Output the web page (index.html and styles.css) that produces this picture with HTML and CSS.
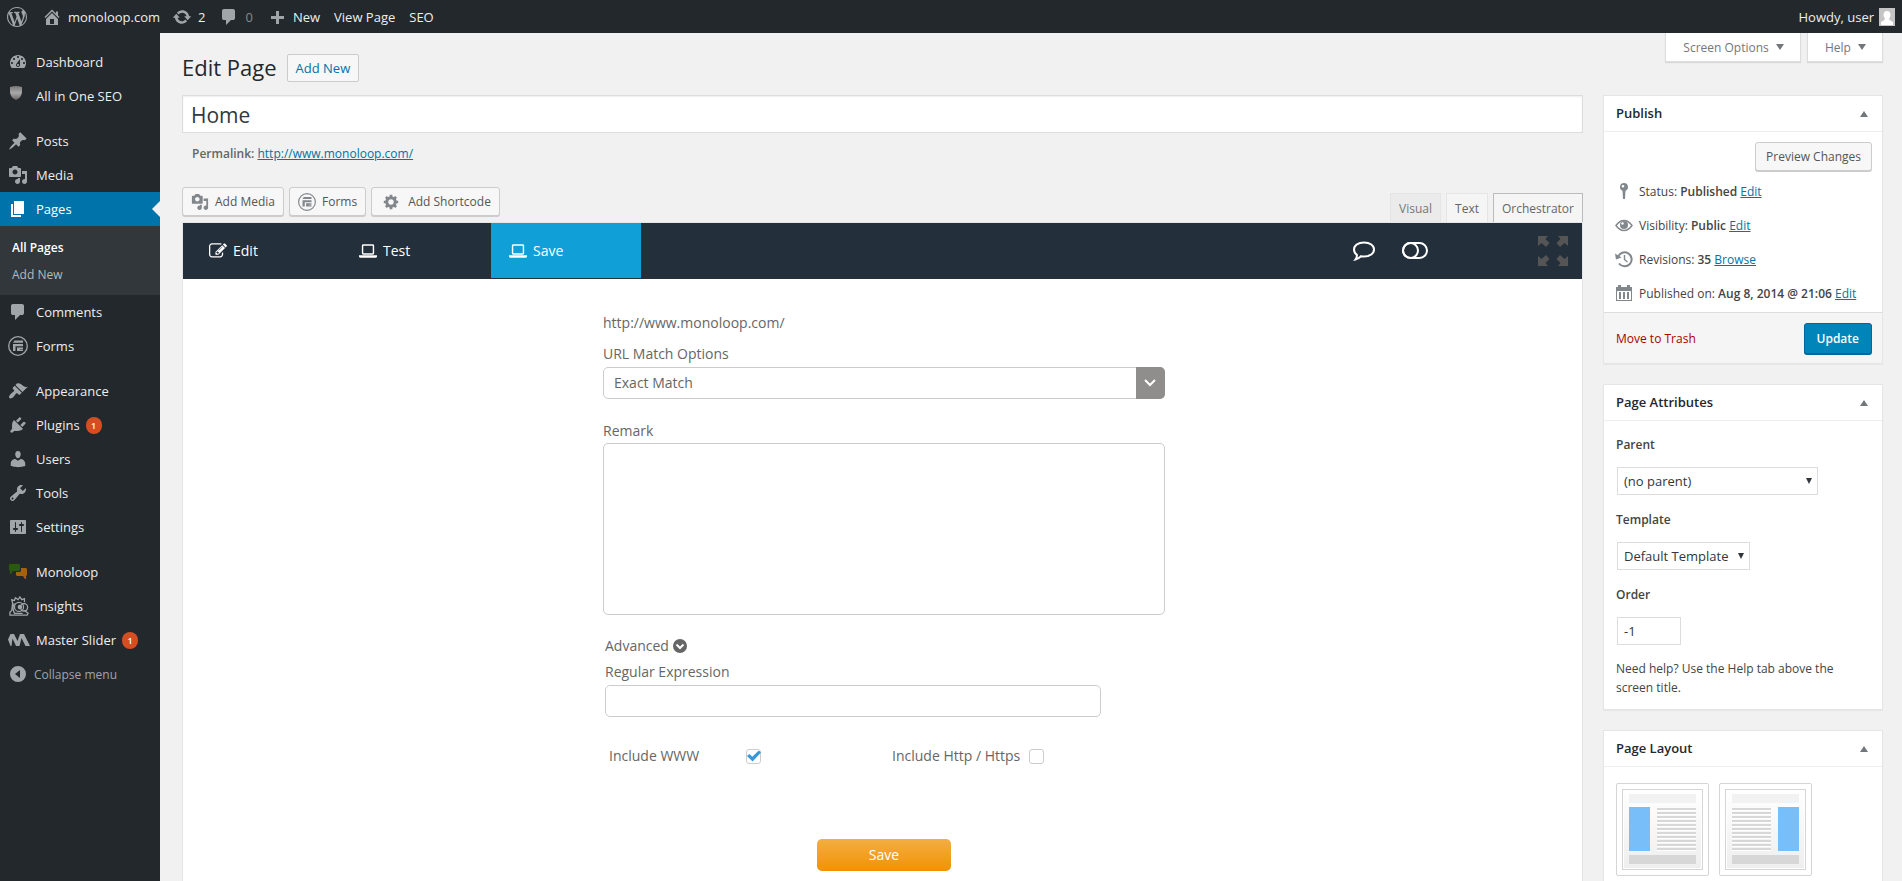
FILE: index.html
```html
<!DOCTYPE html>
<html lang="en">
<head>
    <meta charset="UTF-8">
    <meta name="viewport" content="width=device-width, initial-scale=1.0">
    <title>Edit Page</title>
    <link rel="stylesheet" href="styles.css">
</head>
<body>
    <!-- Icon set -->
    <svg class="sprite" aria-hidden="true">
        <symbol id="i-wordpress" viewBox="0 0 20 20"><path d="M20 10c0-5.51-4.49-10-10-10C4.48 0 0 4.49 0 10c0 5.52 4.48 10 10 10 5.51 0 10-4.48 10-10zM7.78 15.37L4.37 6.22c.55-.02 1.17-.08 1.17-.08.5-.06.44-1.13-.06-1.11 0 0-1.45.11-2.37.11-.18 0-.37 0-.58-.01C4.12 2.69 6.87 1.11 10 1.11c2.33 0 4.45.87 6.05 2.34-.68-.11-1.65.39-1.65 1.58 0 .74.45 1.36.9 2.1.35.61.55 1.36.55 2.46 0 1.49-1.4 5-1.4 5l-3.03-8.37c.54-.02.82-.17.82-.17.5-.05.44-1.25-.06-1.22 0 0-1.44.12-2.38.12-.87 0-2.33-.12-2.33-.12-.5-.03-.56 1.2-.06 1.22l.92.08 1.26 3.41zM17.41 10c.24-.64.74-1.87.43-4.25.7 1.29 1.05 2.71 1.05 4.25 0 3.29-1.73 6.24-4.4 7.78.97-2.59 1.94-5.2 2.92-7.78zM6.1 18.09C3.12 16.65 1.11 13.53 1.11 10c0-1.3.23-2.48.72-3.59C3.25 10.3 4.67 14.2 6.1 18.09zm4.03-6.63l2.58 6.98c-.86.29-1.76.45-2.71.45-.79 0-1.57-.11-2.29-.33.81-2.38 1.62-4.74 2.42-7.1z"/></symbol>
        <symbol id="i-home" viewBox="0 0 20 20"><path d="M16 8.5l1.53 1.53-1.06 1.06L10 4.6l-6.47 6.49-1.06-1.06L10 2.5l4 4v-2h2v4zm-6-2.46l6 5.99V18H4v-5.97zM12 17v-5H8v5h4z"/></symbol>
        <symbol id="i-update" viewBox="0 0 20 20"><path d="M10.2 3.28c3.53 0 6.43 2.61 6.92 6h2.08l-3.5 4-3.5-4h2.32c-.45-1.97-2.21-3.45-4.32-3.45-1.45 0-2.73.71-3.54 1.78L4.95 5.66C6.23 4.2 8.11 3.28 10.2 3.28zm-.4 13.44c-3.52 0-6.43-2.61-6.92-6H.8l3.5-4c1.17 1.33 2.33 2.67 3.5 4H5.48c.45 1.97 2.21 3.45 4.32 3.45 1.45 0 2.73-.71 3.54-1.78l1.71 1.95c-1.28 1.46-3.15 2.38-5.25 2.38z"/></symbol>
        <symbol id="i-comment" viewBox="0 0 20 20"><path d="M5 2h9q.82 0 1.41.59T16 4v7q0 .82-.59 1.41T14 13h-2l-5 5v-5H5q-.82 0-1.41-.59T3 11V4q0-.82.59-1.41T5 2z"/></symbol>
        <symbol id="i-plus" viewBox="0 0 20 20"><path d="M17 9v3h-5v5H9v-5H4V9h5V4h3v5h5z"/></symbol>
        <symbol id="i-dashboard" viewBox="0 0 20 20"><path d="M3.76 16h12.48c1.1-1.37 1.76-3.11 1.76-5 0-4.42-3.58-8-8-8s-8 3.58-8 8c0 1.89.66 3.63 1.76 5zM10 4c.55 0 1 .45 1 1s-.45 1-1 1-1-.45-1-1 .45-1 1-1zM6 6c.55 0 1 .45 1 1s-.45 1-1 1-1-.45-1-1 .45-1 1-1zm8 0c.55 0 1 .45 1 1s-.45 1-1 1-1-.45-1-1 .45-1 1-1zm-5.37 5.55L12 7v6c0 1.1-.9 2-2 2s-2-.9-2-2c0-.57.24-1.08.63-1.45zM4 10c.55 0 1 .45 1 1s-.45 1-1 1-1-.45-1-1 .45-1 1-1zm12 0c.55 0 1 .45 1 1s-.45 1-1 1-1-.45-1-1 .45-1 1-1zm-5 3c0-.55-.45-1-1-1s-1 .45-1 1 .45 1 1 1 1-.45 1-1z"/></symbol>
        <symbol id="i-shield" viewBox="0 0 20 20">
            <linearGradient id="shield-fill" x1="0" y1="0" x2="0" y2="1"><stop offset="0" stop-color="#777"/><stop offset=".5" stop-color="#aaa"/><stop offset="1" stop-color="#666"/></linearGradient>
            <path fill="url(#shield-fill)" d="M2 1q6-2 12 0v5q0 5-6 8-6-3-6-8z"/>
        </symbol>
        <symbol id="i-pin" viewBox="0 0 20 20"><path d="M10.44 3.02l1.82-1.82 6.36 6.35-1.83 1.82c-1.05-.68-2.48-.57-3.41.36l-.75.75c-.92.93-1.04 2.35-.35 3.41l-1.83 1.82-2.41-2.41-2.8 2.79c-.42.42-3.38 2.71-3.8 2.29s1.86-3.39 2.28-3.81l2.79-2.79L4.1 9.36l1.83-1.82c1.05.69 2.48.57 3.4-.36l.75-.75c.93-.92 1.05-2.35.36-3.41z"/></symbol>
        <symbol id="i-media" viewBox="0 0 20 20"><path d="M13 11V4c0-.55-.45-1-1-1h-1.67L9 1H5L3.67 3H2c-.55 0-1 .45-1 1v7c0 .55.45 1 1 1h10c.55 0 1-.45 1-1zM7 4.5c1.38 0 2.5 1.12 2.5 2.5S8.38 9.5 7 9.5 4.5 8.38 4.5 7 5.62 4.5 7 4.5zM14 6h5v10.5c0 1.38-1.12 2.5-2.5 2.5S14 17.88 14 16.5s1.12-2.5 2.5-2.5c.17 0 .34.02.5.05V9h-3V6zm-4 8.05V13h2v3.5c0 1.38-1.12 2.5-2.5 2.5S7 17.88 7 16.5 8.12 14 9.5 14c.17 0 .34.02.5.05z"/></symbol>
        <symbol id="i-page" viewBox="0 0 20 20"><path d="M6 15V2h10v13H6zm-1 1h8v2H3V5h2v11z"/></symbol>
        <symbol id="i-forms" viewBox="0 0 20 20"><circle cx="10" cy="10" r="9.3" fill="none" stroke="currentColor" stroke-width="1.3"/><path d="M6.500 4.500H15v2.200H5zM5 8h10v2.200H7.500V15H5zM9 11.500h6v1.500h-3v.5h3V15H9z"/></symbol>
        <symbol id="i-appearance" viewBox="0 0 20 20"><path d="M14.48 11.06L7.41 3.99l1.5-1.5c.5-.56 2.3-.47 3.51.32 1.21.8 1.43 1.28 2.91 2.1 1.18.64 2.45 1.26 4.45.85zm-.71.71L6.7 4.7 4.93 6.47c-.39.39-.39 1.02 0 1.41l1.06 1.06c.39.39.39 1.03 0 1.42-.6.6-1.43 1.11-2.21 1.69-.35.26-.7.53-1.01.84C1.43 14.23.4 16.08 1.4 17.07c.99 1 2.84-.03 4.18-1.36.31-.31.58-.66.85-1.02.57-.78 1.08-1.61 1.69-2.21.39-.39 1.02-.39 1.41 0l1.06 1.06c.39.39 1.02.39 1.41 0z"/></symbol>
        <symbol id="i-plugins" viewBox="0 0 20 20"><path d="M13.11 4.36L9.87 7.6 8 5.73l3.24-3.24c.35-.34 1.05-.2 1.56.32.52.51.66 1.21.31 1.55zm-8 1.77l.91-1.12 9.01 9.01-1.19.84c-.71.71-2.63 1.16-3.82 1.16H6.14L4.9 17.26c-.59.59-1.54.59-2.12 0-.59-.58-.59-1.53 0-2.12l1.24-1.24v-3.88c0-1.13.4-3.19 1.09-3.89zm7.26 3.97l3.24-3.24c.34-.35 1.04-.21 1.55.31.52.51.66 1.21.31 1.55l-3.24 3.25z"/></symbol>
        <symbol id="i-users" viewBox="0 0 20 20"><path d="M10 9.25c-2.27 0-2.73-3.44-2.73-3.44C7 4.02 7.82 2 9.97 2c2.16 0 2.98 2.02 2.71 3.81 0 0-.41 3.44-2.68 3.44zm0 2.57L12.72 10c2.39 0 4.52 2.33 4.52 4.53v2.49s-3.65 1.13-7.24 1.13c-3.65 0-7.24-1.13-7.24-1.13v-2.49c0-2.25 1.94-4.48 4.47-4.48z"/></symbol>
        <symbol id="i-tools" viewBox="0 0 20 20"><path d="M16.68 9.77c-1.34 1.34-3.3 1.67-4.95.99l-5.41 6.52c-.99.99-2.59.99-3.58 0s-.99-2.59 0-3.57l6.52-5.42c-.68-1.65-.35-3.61.99-4.95 1.28-1.28 3.12-1.62 4.72-1.06l-2.89 2.89 2.82 2.82 2.86-2.87c.53 1.58.18 3.39-1.08 4.65zM3.81 16.21c.4.39 1.04.39 1.43 0 .4-.4.4-1.04 0-1.43-.39-.4-1.03-.4-1.43 0-.39.39-.39 1.03 0 1.43z"/></symbol>
        <symbol id="i-settings" viewBox="0 0 20 20"><path d="M18 16V4c0-.55-.45-1-1-1H3c-.55 0-1 .45-1 1v12c0 .55.45 1 1 1h14c.55 0 1-.45 1-1zM8 11h1c.55 0 1 .45 1 1s-.45 1-1 1H8v1.5c0 .28-.22.5-.5.5s-.5-.22-.5-.5V13H6c-.55 0-1-.45-1-1s.45-1 1-1h1V5.500c0-.28.22-.5.5-.5s.5.22.5.5V11zm5-2h-1c-.55 0-1-.45-1-1s.45-1 1-1h1V5.500c0-.28.22-.5.5-.5s.5.22.5.5V7h1c.55 0 1 .45 1 1s-.45 1-1 1h-1v5.500c0 .28-.22.5-.5.5s-.5-.22-.5-.5V9z"/></symbol>
        <symbol id="i-monoloop" viewBox="0 0 20 20"><path fill="#2a5a10" d="M2 2h9l1 1v5l-1 1H5l-2 3H2V9L1 8V3z"/><path fill="#a5620d" d="M13 6h5l1 1v6l-1 1v3h-1l-2-3H9l-1-1v-3h4l1-1z"/></symbol>
        <symbol id="i-insights" viewBox="0 0 22 22"><g fill="none" stroke="currentColor" stroke-width="1.400"><path d="M4 8l-1-4 3 1 1-3 3 2 2-3 2 3 3-1v4M4 8l-1 8-2 2v3h19l1-2-4-3M6 8q-3 5 0 11h9"/><circle cx="11" cy="12" r="5"/><circle cx="16.500" cy="12.500" r="4"/></g><circle cx="12" cy="12" r="2.500"/></symbol>
        <symbol id="i-masterslider" viewBox="0 0 22 14"><path d="M0 6.500L2.500 1H6l3.500 7L12 1h4l6 12h-4.500L13.500 5l-2 8H8L4.500 5.500l-1 7.500h-1z"/></symbol>
        <symbol id="i-collapse" viewBox="0 0 20 20"><path fill-rule="evenodd" d="M10 2a8 8 0 1 1 0 16 8 8 0 0 1 0-16zm2 4l-5 4 5 4z"/></symbol>
        <symbol id="i-gear" viewBox="0 0 20 20"><circle cx="10" cy="10" r="4.700" fill="none" stroke="currentColor" stroke-width="3.400"/><path d="M8.500 2h3v3h-3zM8.500 15h3v3h-3zM2 8.500h3v3H2zM15 8.500h3v3h-3zM3.300 5.400l2.100-2.100 2 2-2.100 2.100zM12.600 14.700l2.100-2.100 2 2-2.100 2.100zM14.600 3.300l2.100 2.100-2 2-2.100-2.100zM5.300 12.600l2.100 2.100-2 2-2.100-2.100z"/></symbol>
        <symbol id="i-edit" viewBox="0 0 1792 1792"><path d="M888 1184l116-116-152-152-116 116v56h96v96h56zm440-720q-16-16-33 1l-350 350q-17 17-1 33t33-1l350-350q17-17 1-33zm80 594v190q0 119-84.500 203.500t-203.500 84.500h-832q-119 0-203.500-84.500t-84.500-203.500v-832q0-119 84.500-203.500t203.500-84.500h832q63 0 117 25 15 7 18 23 3 17-9 29l-49 49q-14 14-32 8-23-6-45-6h-832q-66 0-113 47t-47 113v832q0 66 47 113t113 47h832q66 0 113-47t47-113v-126q0-13 9-22l64-64q15-15 35-7t20 29zm-96-738l288 288-672 672h-288v-288zm444 132l-92 92-288-288 92-92q28-28 68-28t68 28l152 152q28 28 28 68t-28 68z"/></symbol>
        <symbol id="i-laptop" viewBox="0 0 19 18"><path fill-rule="evenodd" d="M4.500 2h10A1.500 1.500 0 0 1 16 3.500v8a1.500 1.500 0 0 1-1.500 1.500h-10A1.500 1.500 0 0 1 3 11.500v-8A1.500 1.500 0 0 1 4.500 2zm0 1.500v8h10v-8zM0 13.500h19v1.500q-.3 1-1.500 1h-16Q.3 16 0 15z"/></symbol>
        <symbol id="i-bubble" viewBox="0 0 24 20"><path fill="none" stroke="currentColor" stroke-width="2" d="M12 1.500c6 0 10 3 10 7s-4 7-10 7q-1.500 0-3-.3Q6 18 3.500 18.500q1.500-2 1.500-4.500-3-2.200-3-5.500c0-4 4-7 10-7z"/></symbol>
        <symbol id="i-toggle" viewBox="0 0 26 18"><g fill="none" stroke="currentColor" stroke-width="2"><rect x="1" y="1" width="24" height="15" rx="7.500"/><circle cx="8.500" cy="8.500" r="7.500"/></g></symbol>
        <symbol id="i-expand" viewBox="0 0 30 30"><path d="M0 0h10L7.500 3l4 4-3.500 4-4.500-4L0 10zM30 0v10l-3.500-3-4.500 4-3.500-4 4-4L20 0zM0 30V20l3.500 3L8 19l3.500 4-4 4 2.500 3zM30 30H20l2.500-3-4-4 3.500-4 4.500 4 3.500-3z"/></symbol>
        <symbol id="i-status" viewBox="0 0 20 20"><path fill-rule="evenodd" d="M10 2a4 4 0 0 1 1.500 7.700L11 18H9l-.5-8.300A4 4 0 0 1 10 2zm-1 2a1.300 1.300 0 1 0 0 2.600A1.300 1.300 0 0 0 9 4z"/></symbol>
        <symbol id="i-eye" viewBox="0 0 20 20"><path fill="none" stroke="currentColor" stroke-width="1.400" d="M2 10.500q3.500-5 8-5t8 5q-3.500 5-8 5t-8-5z"/><circle cx="10" cy="10" r="4"/><circle cx="8.500" cy="8.500" r="1.200" fill="#fff"/></symbol>
        <symbol id="i-backup" viewBox="0 0 20 20"><path fill="none" stroke="currentColor" stroke-width="2" d="M4 8a7 7 0 1 1 1 6.500"/><path d="M1 4.500l1 6 5.500-2z"/><path fill="none" stroke="currentColor" stroke-width="1.400" d="M10.500 6v4.500l3 2.500"/></symbol>
        <symbol id="i-calendar" viewBox="0 0 20 20"><path fill-rule="evenodd" d="M2 4h2V2h3v2h6V2h3v2h2v14H2zm1 4v9h14V8zM5 9h2v7H5zM9 9h2v7H9zM13 9h2v7h-2z"/></symbol>
        <symbol id="i-chevron-circle" viewBox="0 0 14 14"><circle cx="7" cy="7" r="7"/><path fill="none" stroke="#fff" stroke-width="2" d="M3.500 5.500L7 9l3.500-3.500"/></symbol>
    </svg>

    <header class="adminbar">
        <a href="#" class="ab-logo" aria-label="About WordPress"><svg class="icon"><use href="#i-wordpress"/></svg></a>
        <a href="#" class="ab-site"><svg class="icon"><use href="#i-home"/></svg>monoloop.com</a>
        <a href="#" class="ab-updates"><svg class="icon"><use href="#i-update"/></svg>2</a>
        <a href="#" class="ab-comments"><svg class="icon"><use href="#i-comment"/></svg>0</a>
        <a href="#" class="ab-new"><svg class="icon"><use href="#i-plus"/></svg>New</a>
        <a href="#">View Page</a>
        <a href="#">SEO</a>
        <a href="#" class="ab-user">Howdy, user
            <svg class="avatar" viewBox="0 0 16 18"><path fill="#c4c4c4" d="M0 0h16v18H0z"/><path fill="#fff" d="M8 3q3.500 0 3.500 4 0 2-1.500 3.500 0 1.500 4 3.500v3H2v-3q4-2 4-3.500Q4.500 9 4.500 7 4.500 3 8 3z"/></svg>
        </a>
    </header>

    <div class="layout">
        <nav class="menu">
            <ul>
                <li><a href="#"><svg class="icon"><use href="#i-dashboard"/></svg>Dashboard</a></li>
                <li class="group-end"><a href="#"><svg class="icon"><use href="#i-shield"/></svg>All in One SEO</a></li>
                <li><a href="#"><svg class="icon"><use href="#i-pin"/></svg>Posts</a></li>
                <li><a href="#"><svg class="icon"><use href="#i-media"/></svg>Media</a></li>
                <li>
                    <a href="#" class="current"><svg class="icon"><use href="#i-page"/></svg>Pages</a>
                    <ul class="submenu">
                        <li><a href="#" class="active">All Pages</a></li>
                        <li><a href="#">Add New</a></li>
                    </ul>
                </li>
                <li><a href="#"><svg class="icon"><use href="#i-comment"/></svg>Comments</a></li>
                <li class="group-end"><a href="#"><svg class="icon"><use href="#i-forms"/></svg>Forms</a></li>
                <li><a href="#"><svg class="icon"><use href="#i-appearance"/></svg>Appearance</a></li>
                <li><a href="#"><svg class="icon"><use href="#i-plugins"/></svg>Plugins <span class="count">1</span></a></li>
                <li><a href="#"><svg class="icon"><use href="#i-users"/></svg>Users</a></li>
                <li><a href="#"><svg class="icon"><use href="#i-tools"/></svg>Tools</a></li>
                <li class="group-end"><a href="#"><svg class="icon"><use href="#i-settings"/></svg>Settings</a></li>
                <li><a href="#"><svg class="icon"><use href="#i-monoloop"/></svg>Monoloop</a></li>
                <li><a href="#"><svg class="icon wide"><use href="#i-insights"/></svg>Insights</a></li>
                <li><a href="#"><svg class="icon wide"><use href="#i-masterslider"/></svg>Master Slider <span class="count">1</span></a></li>
                <li><button type="button" class="collapse"><svg class="icon"><use href="#i-collapse"/></svg>Collapse menu</button></li>
            </ul>
        </nav>

        <div class="content">
            <div class="topline">
                <div class="page-title">
                    <h1>Edit Page</h1>
                    <a href="#" class="title-action">Add New</a>
                </div>
                <div class="screen-meta">
                    <button type="button">Screen Options <span class="arrow down"></span></button>
                    <button type="button">Help <span class="arrow down"></span></button>
                </div>
            </div>

            <div class="columns">
                <main class="editor-col">
                    <input type="text" class="title-input" value="Home" aria-label="Title">
                    <div class="permalink"><strong>Permalink:</strong> <a href="#">http://www.monoloop.com/</a></div>

                    <div class="editor-tools">
                        <div class="media-buttons">
                            <button type="button" class="button"><svg class="icon"><use href="#i-media"/></svg>Add Media</button>
                            <button type="button" class="button"><svg class="icon"><use href="#i-forms"/></svg>Forms</button>
                            <button type="button" class="button shortcode"><svg class="icon"><use href="#i-gear"/></svg>Add Shortcode</button>
                        </div>
                        <div class="editor-tabs">
                            <button type="button" class="dim">Visual</button>
                            <button type="button">Text</button>
                            <button type="button" class="selected">Orchestrator</button>
                        </div>
                    </div>

                    <section class="orchestrator">
                        <div class="toolbar">
                            <button type="button" class="step"><svg class="icon"><use href="#i-edit"/></svg>Edit</button>
                            <button type="button" class="step"><svg class="icon"><use href="#i-laptop"/></svg>Test</button>
                            <button type="button" class="step active"><svg class="icon"><use href="#i-laptop"/></svg>Save</button>
                            <div class="toolbar-right">
                                <button type="button" aria-label="Comments"><svg class="bubble"><use href="#i-bubble"/></svg></button>
                                <button type="button" aria-label="Toggle"><svg class="toggle"><use href="#i-toggle"/></svg></button>
                                <button type="button" class="fullscreen" aria-label="Fullscreen"><svg class="expand"><use href="#i-expand"/></svg></button>
                            </div>
                        </div>

                        <form class="save-form">
                            <p class="url">http://www.monoloop.com/</p>
                            <label for="match">URL Match Options</label>
                            <div class="match-select">
                                <select id="match"><option>Exact Match</option></select>
                                <svg viewBox="0 0 29 32"><path fill="none" stroke="#fff" stroke-width="2" d="M9 13l5 5 5-5"/></svg>
                            </div>
                            <label for="remark">Remark</label>
                            <textarea id="remark"></textarea>

                            <div class="advanced">
                                <button type="button" class="advanced-toggle">Advanced <svg><use href="#i-chevron-circle"/></svg></button>
                                <label for="regex">Regular Expression</label>
                                <input type="text" id="regex">
                                <div class="checks">
                                    <label for="www">Include WWW</label>
                                    <input type="checkbox" id="www" checked>
                                    <label for="https">Include Http / Https</label>
                                    <input type="checkbox" id="https">
                                </div>
                            </div>
                            <button type="button" class="save">Save</button>
                        </form>
                    </section>
                </main>

                <aside class="side-col">
                    <section class="postbox">
                        <h2>Publish <span class="arrow up"></span></h2>
                        <div class="publish">
                            <button type="button" class="button preview">Preview Changes</button>
                            <ul>
                                <li><svg class="icon"><use href="#i-status"/></svg><span>Status: <strong>Published</strong> <a href="#">Edit</a></span></li>
                                <li><svg class="icon"><use href="#i-eye"/></svg><span>Visibility: <strong>Public</strong> <a href="#">Edit</a></span></li>
                                <li><svg class="icon"><use href="#i-backup"/></svg><span>Revisions: <strong>35</strong> <a href="#">Browse</a></span></li>
                                <li><svg class="icon"><use href="#i-calendar"/></svg><span>Published on: <strong>Aug 8, 2014 @ 21:06</strong> <a href="#">Edit</a></span></li>
                            </ul>
                        </div>
                        <div class="publish-actions">
                            <a href="#" class="trash">Move to Trash</a>
                            <button type="button" class="update">Update</button>
                        </div>
                    </section>

                    <section class="postbox">
                        <h2>Page Attributes <span class="arrow up"></span></h2>
                        <div class="attributes">
                            <label for="parent">Parent</label>
                            <div class="select-wrap parent"><select id="parent"><option>(no parent)</option></select></div>
                            <label for="template">Template</label>
                            <div class="select-wrap template"><select id="template"><option>Default Template</option></select></div>
                            <label for="order">Order</label>
                            <input type="text" id="order" value="-1">
                            <p>Need help? Use the Help tab above the screen title.</p>
                        </div>
                    </section>

                    <section class="postbox">
                        <h2>Page Layout <span class="arrow up"></span></h2>
                        <div class="layouts">
                            <button type="button" aria-label="Left sidebar"><span class="thumb"><span class="t-head"></span><span class="t-body"><span class="t-side"></span><span class="t-lines"></span></span><span class="t-foot"></span></span></button>
                            <button type="button" aria-label="Right sidebar"><span class="thumb"><span class="t-head"></span><span class="t-body flip"><span class="t-side"></span><span class="t-lines"></span></span><span class="t-foot"></span></span></button>
                        </div>
                    </section>
                </aside>
            </div>
        </div>
    </div>
</body>
</html>
```
FILE: styles.css
```css
* {
    box-sizing: border-box;
}
body {
    margin: 0;
    height: 100vh;
    overflow: hidden;
    display: flex;
    flex-direction: column;
    background: #f1f1f1;
    color: #444;
    font: 12px/19px "Open Sans", sans-serif;
}
ul {
    list-style: none;
    margin: 0;
    padding: 0;
}
h1, h2, p {
    margin: 0;
    font-weight: normal;
}
a {
    color: #0073aa;
}
strong {
    font-weight: 600;
}
button, input, select, textarea {
    font: inherit;
    color: inherit;
    margin: 0;
    outline: none;
}
button {
    cursor: pointer;
}
svg {
    flex: none;
    fill: currentColor;
}
.sprite {
    position: absolute;
    width: 0;
    height: 0;
}
.icon {
    width: 20px;
    height: 20px;
    color: #82878c;
}

/* Admin bar */
.adminbar {
    flex: none;
    height: 33px;
    display: flex;
    align-items: center;
    padding: 1px 7px 0;
    background: #23282d;
    font-size: 13px;
}
.adminbar a {
    display: flex;
    align-items: center;
    color: #eee;
    text-decoration: none;
    margin-right: 14px;
}
.adminbar .icon {
    color: #a0a5aa;
    margin-right: 6px;
}
.adminbar .ab-logo {
    margin-right: 15px;
}
.adminbar .ab-logo .icon {
    margin-right: 0;
}
.adminbar .ab-site {
    margin-right: 12px;
}
.adminbar .ab-comments {
    color: #888;
}
.adminbar .ab-user {
    margin-left: auto;
    margin-right: 0;
    gap: 5px;
}
.avatar {
    width: 16px;
    height: 18px;
}

/* Menu */
.layout {
    flex: 1;
    min-height: 0;
    display: flex;
}
.menu {
    flex: none;
    width: 160px;
    padding-top: 12px;
    background: #23282d;
    font-size: 13px;
}
.menu a, .collapse {
    display: flex;
    align-items: center;
    height: 34px;
    padding: 0 8px;
    color: #eee;
    text-decoration: none;
}
.menu .icon {
    color: #a0a5aa;
    margin-right: 8px;
}
.menu .icon.wide {
    width: 22px;
    margin-right: 6px;
}
.menu .group-end {
    margin-bottom: 11px;
}
.menu .current {
    position: relative;
    background: #0073aa;
    color: #fff;
}
.menu .current .icon {
    color: #fff;
}
.menu .current::after {
    content: "";
    position: absolute;
    right: 0;
    top: 9px;
    border: 8px solid transparent;
    border-left: 0;
    border-right-color: #f1f1f1;
}
.menu .submenu {
    padding: 8px 0 7px;
    background: #32373c;
}
.menu .submenu a {
    height: 27px;
    padding: 0 12px;
    color: #b4b9be;
    font-size: 12px;
}
.menu .submenu .active {
    color: #fff;
    font-weight: 600;
}
.count {
    width: 16px;
    height: 17px;
    margin-left: 6px;
    border-radius: 10px;
    background: #d54e21;
    color: #fff;
    font-size: 9px;
    font-weight: 600;
    line-height: 17px;
    text-align: center;
}
.collapse {
    border: 0;
    background: none;
    color: #a0a5aa;
    font-size: 12px;
}
.menu .collapse .icon {
    margin-right: 6px;
}

/* Page heading */
.content {
    flex: 1;
    min-width: 0;
    display: flex;
    flex-direction: column;
    padding: 0 19px 0 22px;
}
.topline {
    flex: none;
    height: 62px;
    display: flex;
    justify-content: space-between;
    align-items: flex-start;
}
.page-title {
    display: flex;
    align-items: center;
    gap: 10px;
    padding-top: 20px;
}
.page-title h1 {
    color: #23282d;
    font-size: 22px;
    font-weight: 400;
    line-height: 29px;
}
.title-action {
    padding: 4px 8px;
    border: 1px solid #ccc;
    border-radius: 2px;
    background: #f7f7f7;
    font-size: 13px;
    line-height: 18px;
    text-decoration: none;
}
.screen-meta {
    display: flex;
    gap: 6px;
}
.screen-meta button {
    height: 29px;
    padding: 0 16px 0 17px;
    border: 1px solid #ddd;
    border-top: 0;
    background: #fff;
    box-shadow: 0 1px 1px rgba(0, 0, 0, 0.1);
    color: #72777c;
}
.arrow {
    display: inline-block;
    border: 4px solid transparent;
    color: #72777c;
}
.arrow.down {
    border-top: 6px solid;
    border-bottom: 0;
    margin: 0 0 2px 4px;
}
.arrow.up {
    border-bottom: 6px solid;
    border-top: 0;
}
.columns {
    flex: 1;
    min-height: 0;
    display: flex;
    gap: 20px;
}

/* Editor column */
.editor-col {
    flex: 1;
    min-width: 0;
    display: flex;
    flex-direction: column;
}
.title-input {
    flex: none;
    height: 38px;
    padding: 4px 8px 2px;
    border: 1px solid #ddd;
    background: #fff;
    box-shadow: inset 0 1px 2px rgba(0, 0, 0, 0.07);
    color: #32373c;
    font-size: 21px;
}
.permalink {
    padding: 11px 10px 0;
    color: #666;
}
.editor-tools {
    flex: none;
    display: flex;
    justify-content: space-between;
    align-items: flex-end;
    margin-top: 24px;
}
.media-buttons {
    display: flex;
    gap: 5px;
    padding-bottom: 6px;
}
.button {
    display: flex;
    align-items: center;
    height: 29px;
    padding: 0 8px;
    border: 1px solid #ccc;
    border-radius: 3px;
    background: #f7f7f7;
    box-shadow: 0 1px 0 #ccc;
    color: #555;
}
.media-buttons .icon {
    width: 18px;
    height: 18px;
    margin-right: 6px;
}
.media-buttons .shortcode .icon {
    margin: 0 8px 0 2px;
}
.editor-tabs {
    display: flex;
    gap: 5px;
}
.editor-tabs button {
    height: 29px;
    padding: 0 8px;
    border: 1px solid #e5e5e5;
    border-bottom: 0;
    background: #f5f5f5;
    color: #666;
}
.editor-tabs .dim {
    background: #ebebeb;
    color: #777;
}
.editor-tabs .selected {
    border-color: #bbb;
}
.orchestrator {
    flex: 1;
    min-height: 0;
    border: 1px solid #e5e5e5;
    border-bottom: 0;
    background: #fff;
    font-size: 14px;
}
.toolbar {
    height: 56px;
    display: flex;
    padding-left: 8px;
    background: #242f3c;
    color: #fff;
}
.toolbar button {
    display: flex;
    align-items: center;
    padding: 0;
    border: 0;
    background: none;
}
.toolbar .step {
    width: 150px;
    height: 55px;
    padding-left: 18px;
}
.toolbar .step.active {
    background: #119fd7;
}
.toolbar .icon {
    width: 18px;
    height: 18px;
    margin-right: 6px;
    color: inherit;
}
.toolbar-right {
    margin-left: auto;
    display: flex;
    align-items: center;
    gap: 26px;
    padding-right: 14px;
}
.toolbar-right .fullscreen {
    margin-left: 84px;
    color: #555;
}
.bubble {
    width: 24px;
    height: 20px;
}
.toggle {
    width: 26px;
    height: 18px;
}
.expand {
    width: 30px;
    height: 30px;
}

/* Save form */
.save-form {
    display: flex;
    flex-direction: column;
    width: 565px;
    margin: 0 auto;
    padding: 32px 0 0 3px;
    color: #666;
    line-height: 24px;
}
.save-form .url {
    margin-bottom: 7px;
}
.save-form textarea, #regex, .match-select select {
    border: 1px solid #ccc;
    border-radius: 5px;
    background: #fff;
}
.match-select {
    position: relative;
    margin: 1px 0 20px;
    height: 32px;
}
.match-select select {
    appearance: none;
    width: 100%;
    height: 32px;
    padding: 0 10px;
}
.match-select svg {
    position: absolute;
    right: 0;
    top: 0;
    width: 29px;
    height: 32px;
    border-radius: 0 5px 5px 0;
    background: #8f8e8d;
    pointer-events: none;
}
.save-form textarea {
    height: 172px;
    resize: none;
}
.advanced {
    display: flex;
    flex-direction: column;
    padding: 19px 2px 0;
}
.advanced-toggle {
    align-self: flex-start;
    display: flex;
    align-items: center;
    gap: 4px;
    padding: 0;
    margin-bottom: 2px;
    border: 0;
    background: none;
}
.advanced-toggle svg {
    width: 14px;
    height: 14px;
}
#regex {
    width: 496px;
    height: 32px;
    margin-top: 1px;
    padding: 0 10px;
}
.checks {
    display: grid;
    grid-template-columns: 137px 146px 137px 16px;
    align-items: center;
    padding: 27px 4px 0;
}
.checks input {
    appearance: none;
    display: grid;
    place-items: center;
    width: 15px;
    height: 15px;
    border: 1px solid #ccc;
    border-radius: 3px;
    background: #fff;
}
.checks input:checked::before {
    content: "";
    width: 14px;
    height: 11px;
    background: #3498db;
    clip-path: polygon(0 50%, 17% 32%, 38% 56%, 84% 0, 100% 18%, 40% 100%);
}
.save {
    align-self: center;
    width: 134px;
    height: 32px;
    margin-top: 71px;
    border: 0;
    border-radius: 5px;
    background: linear-gradient(#f4ae43, #f19203);
    color: #fff;
}

/* Side column */
.side-col {
    flex: none;
    width: 280px;
    display: flex;
    flex-direction: column;
    gap: 20px;
}
.postbox {
    flex: none;
    border: 1px solid #e5e5e5;
    background: #fff;
    box-shadow: 0 1px 1px rgba(0, 0, 0, 0.04);
}
.postbox h2 {
    display: flex;
    justify-content: space-between;
    align-items: center;
    height: 36px;
    padding: 0 14px 0 12px;
    border-bottom: 1px solid #eee;
    color: #23282d;
    font-size: 13px;
    font-weight: 600;
}
.publish {
    padding: 10px 10px 2px;
}
.preview {
    margin-left: auto;
    padding: 0 10px;
}
.publish ul {
    padding-top: 3px;
}
.publish li {
    display: flex;
    align-items: center;
    gap: 5px;
    height: 34px;
    white-space: nowrap;
}
.publish-actions {
    display: flex;
    justify-content: space-between;
    align-items: center;
    padding: 10px 10px 9px 12px;
    border-top: 1px solid #ddd;
    background: #f5f5f5;
}
.trash {
    color: #a00;
    text-decoration: none;
}
.update {
    height: 31px;
    padding: 0 12px;
    border: 1px solid #006799;
    border-radius: 3px;
    background: #0085ba;
    box-shadow: 0 1px 0 #006799;
    color: #fff;
    font-weight: 600;
}
.attributes {
    display: flex;
    flex-direction: column;
    align-items: flex-start;
    padding: 14px 13px 12px 12px;
}
.attributes label {
    font-weight: 600;
}
.attributes select, .attributes input {
    width: 100%;
    height: 28px;
    padding: 0 6px;
    border: 1px solid #ddd;
    border-radius: 0;
    background: #fff;
    color: #32373c;
    font-size: 13px;
    appearance: none;
}
.select-wrap {
    position: relative;
    margin: 13px 1px 15px;
}
.select-wrap::after {
    content: "";
    position: absolute;
    right: 6px;
    top: 11px;
    border: 3px solid transparent;
    border-top: 6px solid #32373c;
    border-bottom: 0;
}
.parent {
    width: 201px;
}
.template {
    width: 133px;
}
.attributes input {
    width: 64px;
    margin: 13px 1px 14px;
}
.layouts {
    display: flex;
    gap: 10px;
    padding: 16px 12px;
}
.layouts button {
    width: 93px;
    height: 93px;
    padding: 5px;
    border: 1px solid #d5d5d5;
    border-radius: 2px;
    background: #fff;
}
.thumb {
    display: flex;
    flex-direction: column;
    gap: 4px;
    height: 81px;
    padding: 4px 6px 5px;
    border: 1px solid #d5d5d5;
    background: linear-gradient(#fff, #eee);
    box-shadow: inset 0 0 0 1px #fff;
}
.t-head, .t-foot {
    height: 9px;
    background: #f2f2f2;
}
.t-foot {
    background: #d7d7d7;
}
.t-body {
    flex: 1;
    display: flex;
    gap: 7px;
}
.t-body.flip {
    flex-direction: row-reverse;
}
.t-side {
    width: 21px;
    background: #78bef8;
}
.t-lines {
    flex: 1;
    background: repeating-linear-gradient(transparent 0 1px, #d7d7d7 1px 3px, #fff 3px 4px);
}
```
